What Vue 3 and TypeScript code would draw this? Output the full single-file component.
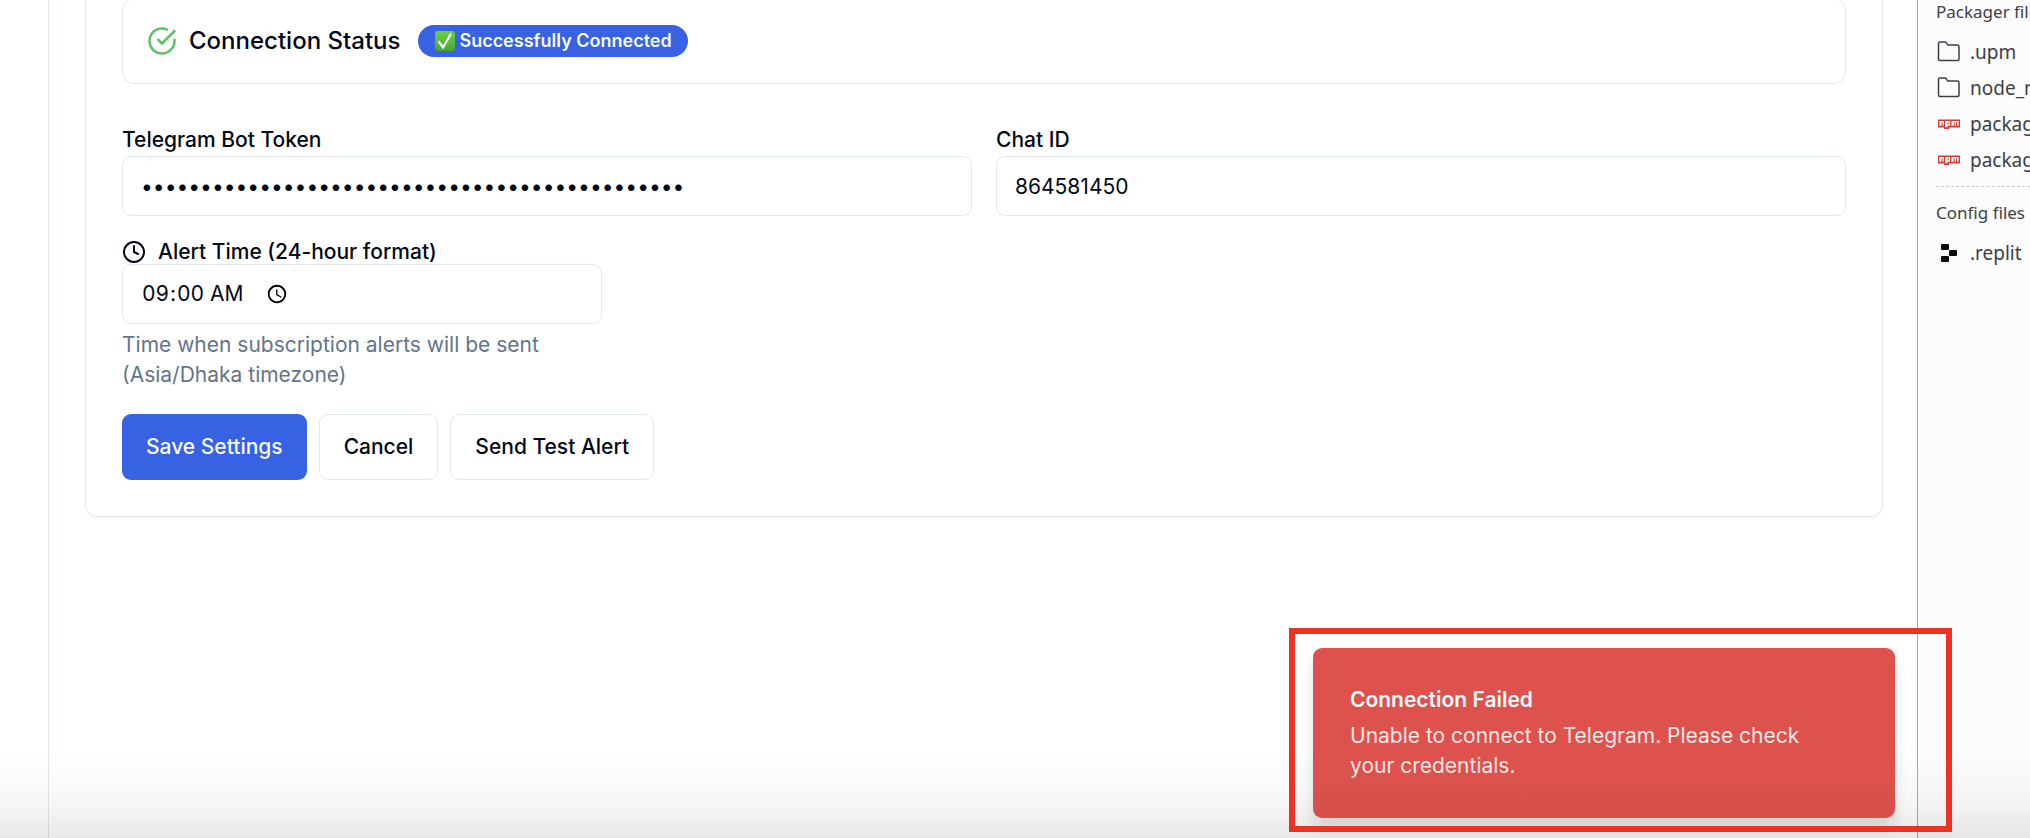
<script setup lang="ts">
import { ref } from 'vue'

interface FileEntry {
  name: string
  kind: 'folder' | 'npm' | 'replit'
}

const token = ref('7481920365:AAFq3kLz9WcXv2TnYb5RmUeHs8JdPoGiQ12')
const chatId = ref('864581450')
const alertTime = ref('09:00')

const packagerFiles: FileEntry[] = [
  { name: '.upm', kind: 'folder' },
  { name: 'node_modules', kind: 'folder' },
  { name: 'package-lock.json', kind: 'npm' },
  { name: 'package.json', kind: 'npm' },
]
const configFiles: FileEntry[] = [{ name: '.replit', kind: 'replit' }]
const groups = [
  { title: 'Packager files', files: packagerFiles },
  { title: 'Config files', files: configFiles },
]
</script>

<template>
  <div class="page">
    <div class="rail"></div>
    <main class="content">
      <section class="card">
        <div class="status">
          <svg class="status-icon" viewBox="0 0 24 24" fill="none" stroke="currentColor" stroke-width="2" stroke-linecap="round" stroke-linejoin="round">
            <path d="M22 11.08V12a10 10 0 1 1-5.93-9.14" />
            <path d="m9 11 3 3L22 4" />
          </svg>
          <h2>Connection Status</h2>
          <span class="badge">
            <svg class="badge-icon" viewBox="0 0 20 20">
              <defs>
                <linearGradient id="tick-fill" x1="0" y1="0" x2="0" y2="1">
                  <stop offset="0" stop-color="#6bd04c" />
                  <stop offset="1" stop-color="#48a82c" />
                </linearGradient>
              </defs>
              <rect width="20" height="20" rx="3" fill="url(#tick-fill)" />
              <path d="M4 11 8 16.500 15.500 3.500" fill="none" stroke="#fff" stroke-width="2.200" stroke-linecap="round" stroke-linejoin="round" />
            </svg>
            Successfully Connected
          </span>
        </div>

        <form @submit.prevent>
          <div class="fields">
            <div class="field">
              <label for="token">Telegram Bot Token</label>
              <input id="token" v-model="token" type="password" autocomplete="off" />
            </div>
            <div class="field">
              <label for="chat">Chat ID</label>
              <input id="chat" v-model="chatId" type="text" />
            </div>
          </div>

          <div class="field time-field">
            <label for="time">
              <svg class="clock" viewBox="0 0 24 24" fill="none" stroke="currentColor" stroke-width="2" stroke-linecap="round" stroke-linejoin="round">
                <circle cx="12" cy="12" r="10" />
                <path d="M12 6v6l4 2" />
              </svg>
              Alert Time (24-hour format)
            </label>
            <input id="time" v-model="alertTime" type="time" />
            <p>Time when subscription alerts will be sent (Asia/Dhaka timezone)</p>
          </div>

          <div class="actions">
            <button type="submit" class="primary">Save Settings</button>
            <button type="button">Cancel</button>
            <button type="button">Send Test Alert</button>
          </div>
        </form>
      </section>
    </main>

    <aside class="files">
      <section v-for="group in groups" :key="group.title">
        <h3>{{ group.title }}</h3>
        <ul>
          <li v-for="file in group.files" :key="file.name">
            <svg v-if="file.kind === 'folder'" viewBox="0 0 24 24" fill="none" stroke="currentColor" stroke-width="1.500" stroke-linejoin="round">
              <path d="M3 2h5q1 0 1.500 1l1 2H20.500a1.500 1.500 0 0 1 1.500 1.500V19a1.500 1.500 0 0 1-1.500 1.500H3A1.500 1.500 0 0 1 1.500 19V3.500A1.500 1.500 0 0 1 3 2Z" />
            </svg>
            <svg v-else-if="file.kind === 'npm'" viewBox="0 0 24 24">
              <path fill="#fff" d="M1.500 8.500h21v6h-11v1.500h-4v-1.500h-6Z" />
              <path fill="#d63a34" fill-rule="evenodd" d="M1 7.500h22v8H12v1.500H7V15.500H1ZM2.300 9v4.800h2.200v-3.300h1.100v3.300h1.200V9ZM8.300 9v6.300h2.200v-1.500h2.600V9ZM10.500 10.500h1.200v1.900h-1.200ZM14.500 9v4.800h2.200v-3.300h1.100v3.300h1.200v-3.300h1.200v3.300h1.400V9Z" />
            </svg>
            <svg v-else viewBox="0 0 24 24" fill="#07080c">
              <rect x="4" y="3" width="8" height="6" rx="1" />
              <rect x="12" y="9" width="8" height="6" rx="1" />
              <rect x="4" y="15" width="8" height="6" rx="1" />
            </svg>
            <span>{{ file.name }}</span>
          </li>
        </ul>
      </section>
    </aside>

    <div class="fade"></div>
    <div class="toast" role="alert">
      <strong>Connection Failed</strong>
      <p>Unable to connect to Telegram. Please check your credentials.</p>
    </div>
    <div class="highlight"></div>
  </div>
</template>

<style>
body {
  margin: 0;
}
</style>

<style scoped>
* {
  box-sizing: border-box;
}
.page {
  position: relative;
  display: flex;
  height: 100vh;
  overflow: hidden;
  background: #fff;
  color: #020817;
  font: 400 21px/30px Inter, sans-serif;
}
h2,
h3,
p,
ul {
  margin: 0;
  padding: 0;
}
.rail {
  flex: 0 0 49px;
  border-right: 1px solid #e2e8f0;
}
.content {
  flex: 1;
  min-width: 0;
  padding: 0 34px 0 36px;
}
.card {
  margin-top: -39px;
  padding: 36px;
  border: 1px solid #e2e8f0;
  border-radius: 12px;
  box-shadow: 0 1px 3px rgba(0, 0, 0, 0.06);
}
.status {
  display: flex;
  align-items: center;
  padding: 24px;
  border: 1px solid #e5e7eb;
  border-radius: 12px;
}
.status-icon {
  width: 30px;
  height: 30px;
  margin-right: 12px;
  color: #5cc269;
}
.status h2 {
  font-size: 24px;
  font-weight: 500;
  line-height: 36px;
}
.badge {
  display: flex;
  align-items: center;
  gap: 4px;
  margin-left: 18px;
  padding: 4px 16px 4px 17px;
  border-radius: 16px;
  background: #3662e3;
  color: #f8fafc;
  font-size: 18px;
  font-weight: 600;
  line-height: 24px;
}
.badge-icon {
  width: 20px;
  height: 20px;
}
form {
  margin-top: 39px;
}
.fields {
  display: grid;
  grid-template-columns: 1fr 1fr;
  gap: 24px;
}
.field {
  display: flex;
  flex-direction: column;
}
.field label {
  display: flex;
  align-items: center;
  gap: 12px;
  height: 33px;
  font-weight: 500;
}
.clock {
  width: 24px;
  height: 24px;
}
.field input {
  width: 100%;
  height: 60px;
  padding: 12px 18px;
  border: 1px solid #e2e8f0;
  border-radius: 9px;
  background: #fff;
  color: #020817;
  font: inherit;
}
.field input[type='time'] {
  font-variant-numeric: tabular-nums;
}
.field input::-webkit-datetime-edit {
  flex: none;
}
.field input::-webkit-calendar-picker-indicator {
  margin-left: 18px;
}
.time-field {
  width: 480px;
  margin-top: 24px;
  margin-bottom: 24px;
}
.time-field label {
  height: 24px;
}
.time-field p {
  margin-top: 6px;
  color: #64748b;
}
.actions {
  display: flex;
  gap: 12px;
}
button {
  height: 66px;
  padding: 0 24px;
  border: 1px solid #e2e8f0;
  border-radius: 9px;
  background: #fff;
  color: #020817;
  font: inherit;
  font-weight: 500;
}
button.primary {
  border: 0;
  background: #3662e3;
  color: #f8fafc;
}
.files {
  flex: 0 0 113px;
  padding-left: 18px;
  border-left: 1px solid #a9a9ab;
  background: #fcfcfc;
  color: #3c3f46;
  font-family: "Noto Sans", sans-serif;
  font-size: 19px;
  white-space: nowrap;
  overflow: hidden;
}
.files h3 {
  font-size: 17px;
  font-weight: 400;
  line-height: 24px;
}
.files section + section {
  margin-top: 8px;
  padding-top: 14px;
  border-top: 1px dashed #c6c7ca;
}
.files ul {
  padding: 10px 0 0 1px;
  list-style: none;
}
.files li {
  display: flex;
  align-items: center;
  gap: 9px;
  height: 36px;
}
.files svg {
  flex: none;
  width: 24px;
  height: 24px;
}
.toast {
  position: absolute;
  right: 135px;
  bottom: 20px;
  width: 582px;
  padding: 36px;
  border: 1px solid #dd524c;
  border-radius: 9px;
  background: linear-gradient(#dd524c 75%, #d54f49);
  border-color: transparent;
  background-origin: border-box;
  box-shadow: 0 10px 15px rgba(0, 0, 0, 0.12);
  color: #f8fafc;
}
.toast strong {
  display: block;
  font-weight: 600;
}
.toast p {
  margin-top: 6px;
  padding-right: 24px;
  opacity: 0.88;
}
.fade {
  position: absolute;
  inset: auto 0 0;
  height: 90px;
  background: linear-gradient(rgba(0, 0, 0, 0), rgba(0, 0, 0, 0.03) 60%, rgba(0, 0, 0, 0.09));
  pointer-events: none;
}
.highlight {
  position: absolute;
  right: 78px;
  bottom: 6px;
  width: 663px;
  height: 204px;
  border: 6px solid #eb3223;
  pointer-events: none;
}
</style>
